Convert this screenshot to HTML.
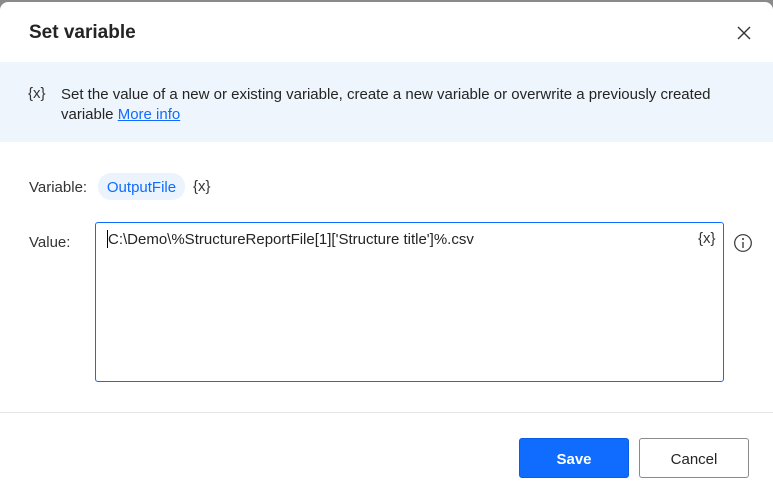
<!DOCTYPE html>
<html><head><style>
body{margin:0;width:773px;height:502px;background:#8a8a8a;font-family:"Liberation Sans",sans-serif;overflow:hidden;position:relative}
.dlg{position:absolute;left:0;top:2px;width:773px;height:500px;background:#fff;border-radius:8px 8px 0 0}
.a{position:absolute}
.t{font-size:15px}
</style></head><body>
<div class="dlg">
<div class="a" style="left:29px;top:20px;font-size:19px;font-weight:bold;color:#242424">Set variable</div>
<svg class="a" style="left:737px;top:24px" width="14" height="14"><path d="M1 1L13 13M13 1L1 13" stroke="#333" stroke-width="1.4"/></svg>
<div class="a" style="left:0;top:60px;width:773px;height:80px;background:#eff5fd"></div>
<div class="a t" style="left:28px;top:83px;color:#333">{x}</div>
<div class="a t" style="left:61px;top:83px;line-height:20px;color:#242424;width:660px">Set the value of a new or existing variable, create a new variable or overwrite a previously created variable <span style="color:#0f6cff;text-decoration:underline">More info</span></div>
<div class="a t" style="left:29px;top:177px;color:#333">Variable:</div>
<div class="a t" style="left:98px;top:171px;width:87px;height:27px;border-radius:13px;background:#ebf3fd;color:#0f6cff;line-height:29px;text-align:center">OutputFile</div>
<div class="a t" style="left:193px;top:176px;color:#333">{x}</div>
<div class="a t" style="left:29px;top:232px;color:#333">Value:</div>
<div class="a" style="left:95px;top:220px;width:627px;height:158px;border:1px solid #0f6cff;border-radius:3px"></div>
<div class="a" style="left:107px;top:228px;width:1px;height:18px;background:#000"></div>
<div class="a t" style="left:108px;top:229px;color:#242424">C:\Demo\%StructureReportFile[1]['Structure title']%.csv</div>
<div class="a t" style="left:698px;top:228px;color:#333">{x}</div>
<svg class="a" style="left:733px;top:231px" width="20" height="20"><circle cx="10" cy="10" r="8.3" fill="none" stroke="#333" stroke-width="1.2"/><circle cx="10" cy="6" r="1" fill="#333"/><path d="M10 9v6" stroke="#333" stroke-width="1.3"/></svg>
<div class="a" style="left:0;top:410px;width:773px;height:1px;background:#e5e5e5"></div>
<div class="a t" style="left:519px;top:436px;width:108px;height:38px;background:#0f6cff;border:1px solid #0a5ce0;border-radius:3px;color:#fff;font-weight:bold;line-height:42px;text-align:center">Save</div>
<div class="a t" style="left:639px;top:436px;width:108px;height:38px;border:1px solid #8a8a8a;border-radius:3px;color:#242424;line-height:42px;text-align:center">Cancel</div>
</div>
</body></html>
